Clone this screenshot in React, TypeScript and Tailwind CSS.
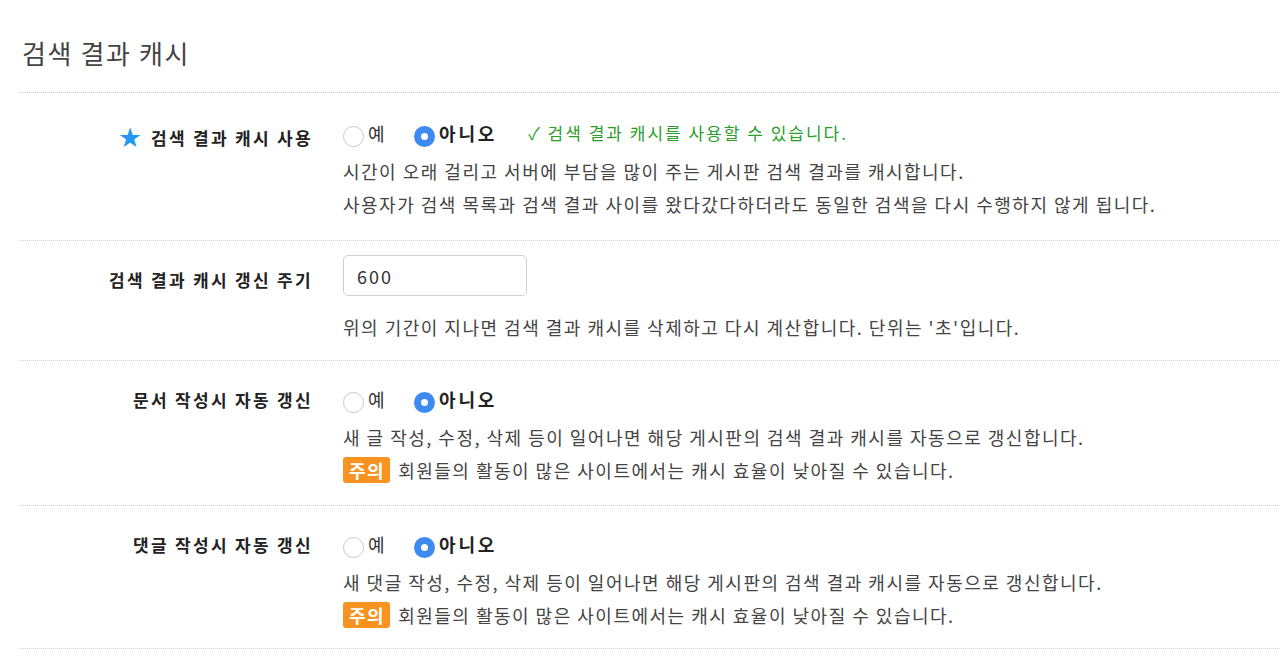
import React from "react";

const font = { fontFamily: '"Noto Sans CJK KR", "Noto Sans", sans-serif' };

function Radio({ label, checked }: { label: string; checked?: boolean }) {
  return (
    <label className="inline-flex items-center mr-[28px]">
      {checked ? (
        <span className="w-[21px] h-[21px] rounded-full bg-[#3d8af0] flex items-center justify-center mt-[6px] mr-[4px]">
          <span className="w-[7px] h-[7px] rounded-full bg-white" />
        </span>
      ) : (
        <span className="w-[21px] h-[21px] rounded-full border border-[#c8c8c8] bg-white mt-[6px] mr-[4px]" />
      )}
      <span className={checked ? "font-bold text-[#222] tracking-[2.8px]" : "text-[#333]"}>{label}</span>
    </label>
  );
}

function Badge() {
  return (
    <span className="inline-block bg-[#f7931e] text-white font-bold rounded-[3px] pl-[6px] pr-[5px] leading-[26px] mr-[8px]">
      주의
    </span>
  );
}

function Row({
  label,
  star,
  children,
}: {
  label: string;
  star?: boolean;
  children: React.ReactNode;
}) {
  return (
    <div className="flex border-t border-dotted border-[#d4d4d4]">
      <div className="w-[293px] shrink-0 text-right font-bold text-[#222] text-[17px] tracking-[2.3px] pt-[26px]">
        {star && <span className="text-[#2196f3] text-[22px] mr-[10px] tracking-normal">★</span>}
        {label}
      </div>
      <div className="pl-[30px] flex-1">{children}</div>
    </div>
  );
}

export default function App() {
  return (
    <div className="bg-white w-[1280px] h-[656px] overflow-hidden" style={font}>
      <div className="pl-[20px]">
        <h1 className="text-[26px] tracking-[1.6px] text-[#444] pl-[2px] pt-[34px] pb-[20px] leading-[38px]">검색 결과 캐시</h1>

        <Row label="검색 결과 캐시 사용" star>
          <div className="pt-[24px] pb-[19px] text-[18px] tracking-[1.5px]">
            <div className="flex items-center h-[32px]">
              <Radio label="예" />
              <Radio label="아니오" checked />
              <span className="text-[#2a9d2a] text-[17px] tracking-[2px] ml-[3px]">✓ 검색 결과 캐시를 사용할 수 있습니다.</span>
            </div>
            <div className="mt-[6px] text-[#444] leading-[33px]">
              <p>시간이 오래 걸리고 서버에 부담을 많이 주는 게시판 검색 결과를 캐시합니다.</p>
              <p>사용자가 검색 목록과 검색 결과 사이를 왔다갔다하더라도 동일한 검색을 다시 수행하지 않게 됩니다.</p>
            </div>
          </div>
        </Row>

        <Row label="검색 결과 캐시 갱신 주기">
          <div className="pt-[14px] pb-[16px] text-[18px] tracking-[1.5px]">
            <input
              defaultValue="600"
              className="w-[184px] h-[41px] border border-[#cfcfcf] rounded-[5px] px-[13px] text-[#333] tracking-[2px] outline-none"
            />
            <p className="mt-[15px] text-[#444] leading-[33px]">
              위의 기간이 지나면 검색 결과 캐시를 삭제하고 다시 계산합니다. 단위는 '초'입니다.
            </p>
          </div>
        </Row>

        <Row label="문서 작성시 자동 갱신">
          <div className="pt-[22px] pb-[18px] text-[18px] tracking-[1.5px]">
            <div className="flex items-center h-[32px]">
              <Radio label="예" />
              <Radio label="아니오" checked />
            </div>
            <div className="mt-[6px] text-[#444] leading-[33px]">
              <p>새 글 작성, 수정, 삭제 등이 일어나면 해당 게시판의 검색 결과 캐시를 자동으로 갱신합니다.</p>
              <p>
                <Badge />
                회원들의 활동이 많은 사이트에서는 캐시 효율이 낮아질 수 있습니다.
              </p>
            </div>
          </div>
        </Row>

        <Row label="댓글 작성시 자동 갱신">
          <div className="pt-[22px] pb-[16px] text-[18px] tracking-[1.5px]">
            <div className="flex items-center h-[32px]">
              <Radio label="예" />
              <Radio label="아니오" checked />
            </div>
            <div className="mt-[6px] text-[#444] leading-[33px]">
              <p>새 댓글 작성, 수정, 삭제 등이 일어나면 해당 게시판의 검색 결과 캐시를 자동으로 갱신합니다.</p>
              <p>
                <Badge />
                회원들의 활동이 많은 사이트에서는 캐시 효율이 낮아질 수 있습니다.
              </p>
            </div>
          </div>
        </Row>
        <div className="border-t border-dotted border-[#d4d4d4]" />
      </div>
    </div>
  );
}
